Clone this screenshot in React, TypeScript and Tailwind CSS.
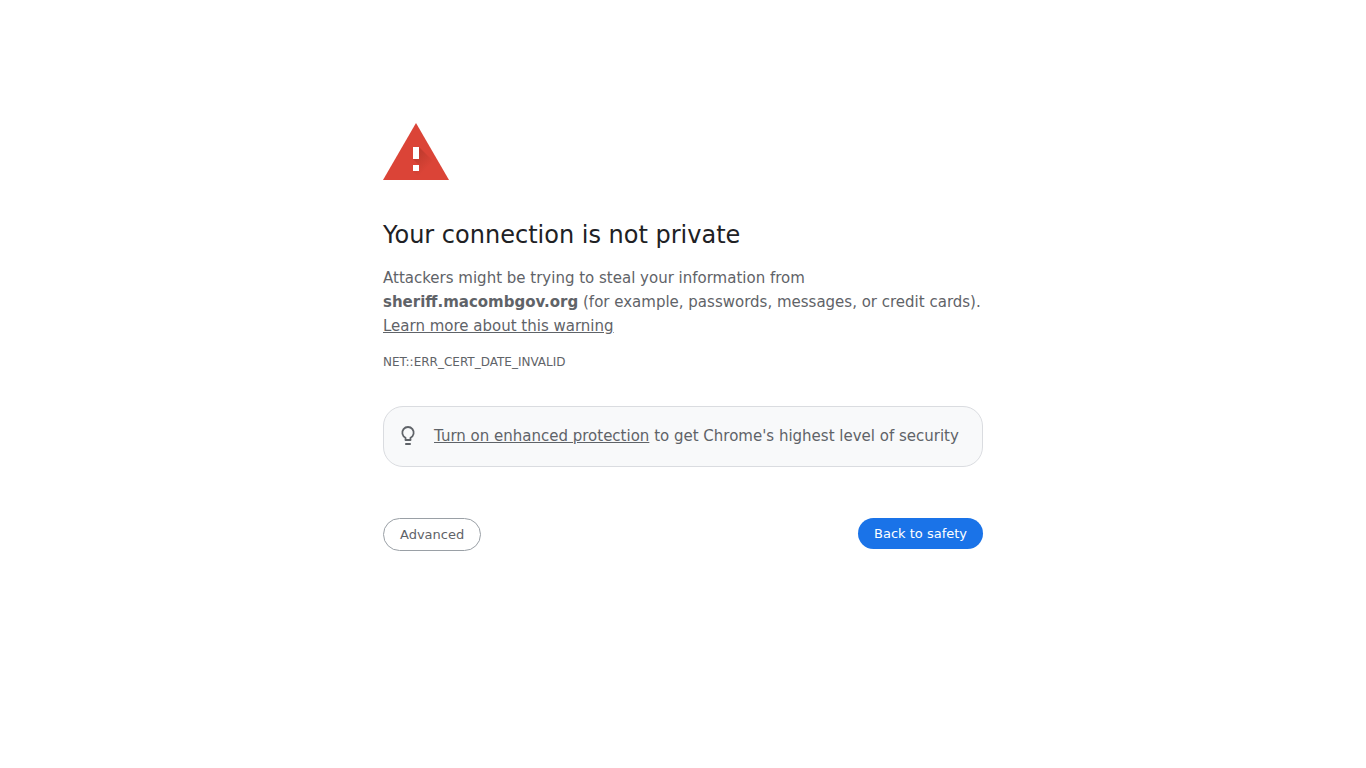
export default function App() {
  return (
    <main className="mx-auto w-full max-w-[600px] pt-[123px] font-['DejaVu_Sans',sans-serif] text-[15px] leading-6 text-[#5f6368]">
      <svg className="block h-[57px] w-[66px]" viewBox="0 0 66 57" aria-hidden="true">
        <defs>
          <linearGradient id="shade" x1="32" y1="32" x2="50" y2="50" gradientUnits="userSpaceOnUse">
            <stop offset="0" stopColor="#8c2a1c" stopOpacity="0.35" />
            <stop offset="0.7" stopColor="#8c2a1c" stopOpacity="0" />
          </linearGradient>
        </defs>
        <path d="M33 0 66 57H0Z" fill="#db4437" />
        <path d="M36 24 56 44 63 57H39L30 48H36V42L30 36H36Z" fill="url(#shade)" />
        <path d="M30 24h6v12h-6zM30 42h6v6h-6z" fill="#fff" />
      </svg>

      <h1 className="mt-10 text-2xl leading-[30px] text-[#202124]">Your connection is not private</h1>

      <p className="mt-4">
        Attackers might be trying to steal your information from{' '}
        <strong>sheriff.macombgov.org</strong> (for example, passwords, messages, or credit cards).{' '}
        <a href="#learn-more" className="underline">Learn more about this warning</a>
      </p>

      <p className="mt-3 text-xs leading-6">NET::ERR_CERT_DATE_INVALID</p>

      <div className="mt-8 flex items-center gap-4 rounded-[20px] border border-[#dadce0] bg-[#f8f9fa] px-[14px] pt-[17px] pb-[18px]">
        <svg className="h-5 w-5 shrink-0" viewBox="0 0 20 20" fill="none" stroke="#5f6368" aria-hidden="true">
          <path d="M7.500 14v-2.200a5.700 5.700 0 1 1 5 0V14z" strokeWidth="1.800" strokeLinejoin="round" />
          <path d="M7.900 18h4.200" strokeWidth="1.800" strokeLinecap="round" />
        </svg>
        <p>
          <a href="#enhanced-protection" className="underline">Turn on enhanced protection</a> to get Chrome's
          highest level of security
        </p>
      </div>

      <div className="mt-[51px] flex flex-wrap items-start justify-between gap-4">
        <button type="button" className="cursor-pointer rounded-full border border-[#9aa0a6] px-4 py-2 text-[13px] leading-[15px]">
          Advanced
        </button>
        <button type="button" className="cursor-pointer rounded-full bg-[#1a73e8] px-4 py-2 text-[13px] leading-[15px] text-white">
          Back to safety
        </button>
      </div>
    </main>
  )
}
